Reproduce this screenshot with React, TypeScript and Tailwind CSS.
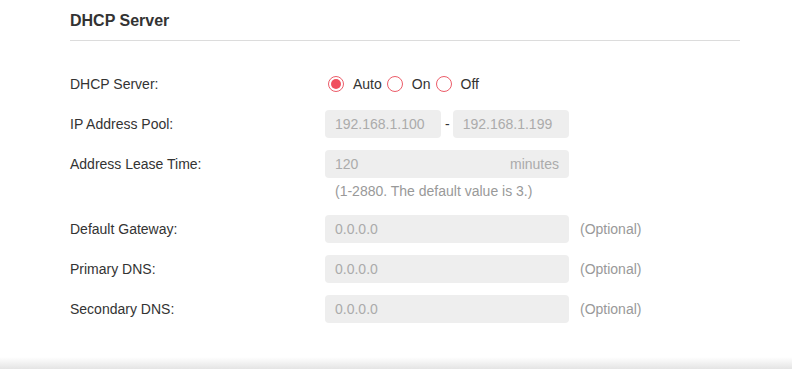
const FONT = { fontFamily: '"Liberation Sans", Arial, sans-serif' }

function Radio({ label, checked }: { label: string; checked?: boolean }) {
  return (
    <label className="flex items-center">
      <span className="flex h-4 w-4 items-center justify-center rounded-full border-[1.5px] border-[#ec5c69]">
        {checked && <span className="h-[10px] w-[10px] rounded-full bg-[#f0505f]" />}
      </span>
      <span className="ml-[9px] mr-[5px] text-[14px] text-[#333]">{label}</span>
    </label>
  )
}

function Field({ value, suffix, className = 'w-[244px]' }: { value: string; suffix?: string; className?: string }) {
  return (
    <div className={`flex h-[28px] items-center justify-between rounded-[4px] bg-[#eeeeee] px-[10px] text-[14px] text-[#ababab] ${className}`}>
      <span>{value}</span>
      {suffix && <span>{suffix}</span>}
    </div>
  )
}

function Row({ label, children }: { label: string; children: React.ReactNode }) {
  return (
    <div className="flex h-[28px] items-center">
      <div className="w-[255px] shrink-0 text-[14px] text-[#333]">{label}</div>
      {children}
    </div>
  )
}

export default function App() {
  return (
    <div className="min-h-[369px] bg-white" style={FONT}>
      <div className="pb-[34px] pl-[70px] pr-[52px]">
        <h2 className="border-b border-[#dcdcdc] pb-[9px] pt-[11px] text-[16px] font-bold leading-[20px] text-[#333]">
          DHCP Server
        </h2>

        <div className="mt-[29px] flex flex-col gap-3">
          <Row label="DHCP Server:">
            <div className="ml-[3px] flex items-center">
              <Radio label="Auto" checked />
              <Radio label="On" />
              <Radio label="Off" />
            </div>
          </Row>

          <Row label="IP Address Pool:">
            <Field value="192.168.1.100" className="w-[116px]" />
            <span className="ml-[4px] mr-[3px] text-[14px] text-[#333]">-</span>
            <Field value="192.168.1.199" className="w-[116px]" />
          </Row>

          <div>
            <Row label="Address Lease Time:">
              <Field value="120" suffix="minutes" />
            </Row>
            <p className="ml-[265px] mt-[3px] mb-[2px] text-[14px] leading-[20px] text-[#999]">
              (1-2880. The default value is 3.)
            </p>
          </div>

          <Row label="Default Gateway:">
            <Field value="0.0.0.0" />
            <span className="ml-[11px] text-[14px] text-[#999]">(Optional)</span>
          </Row>
          <Row label="Primary DNS:">
            <Field value="0.0.0.0" />
            <span className="ml-[11px] text-[14px] text-[#999]">(Optional)</span>
          </Row>
          <Row label="Secondary DNS:">
            <Field value="0.0.0.0" />
            <span className="ml-[11px] text-[14px] text-[#999]">(Optional)</span>
          </Row>
        </div>
      </div>
      <div className="h-[12px] bg-gradient-to-b from-white to-[#e4e4e4]" />
    </div>
  )
}
